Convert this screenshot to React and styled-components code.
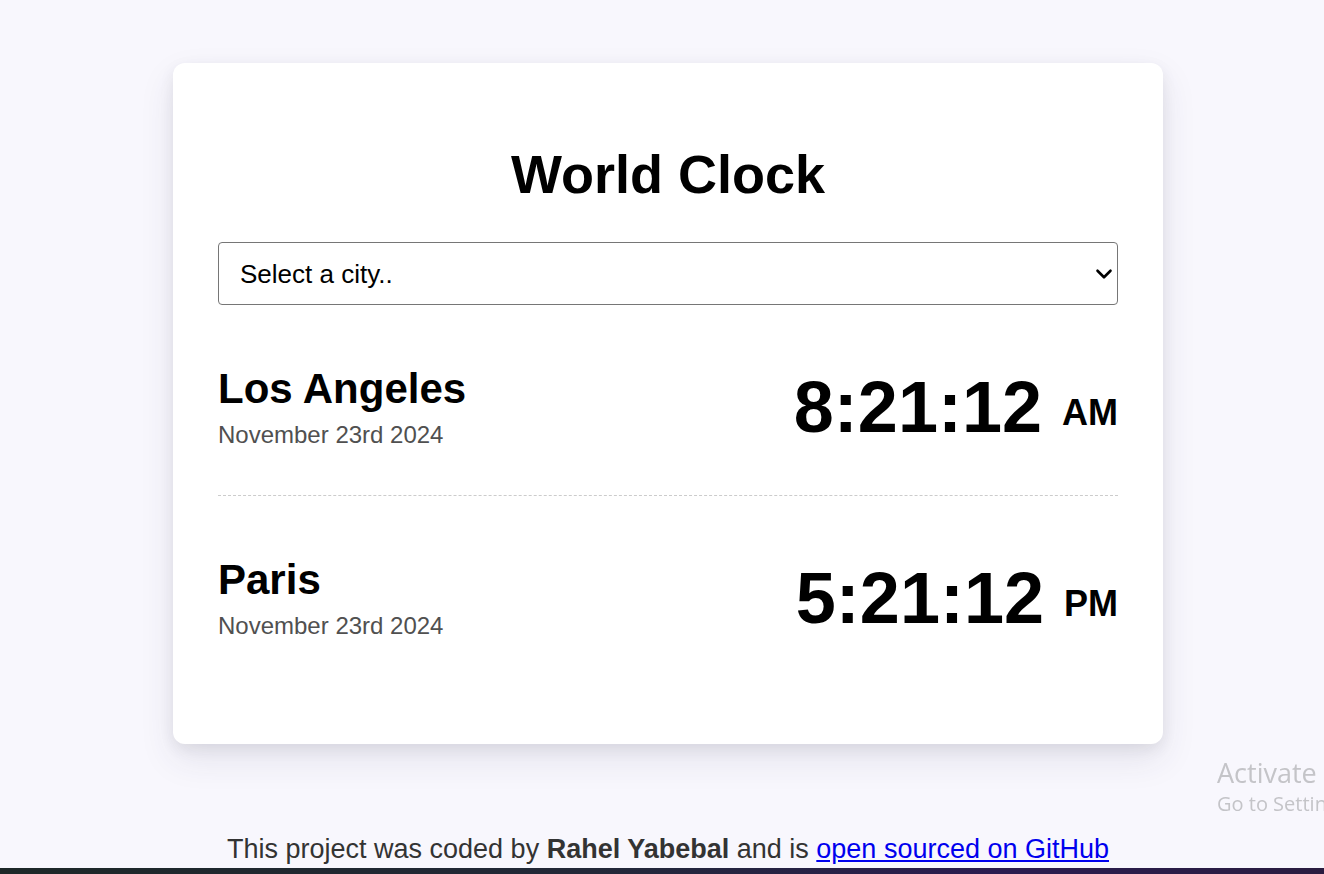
import React from "react";
import styled, { createGlobalStyle } from "styled-components";
import { ChevronDown } from "lucide-react";

const cities = [
  { name: "Los Angeles", date: "November 23rd 2024", time: "8:21:12", period: "AM" },
  { name: "Paris", date: "November 23rd 2024", time: "5:21:12", period: "PM" },
];

export default function App() {
  return (
    <>
      <GlobalStyle />
      <Page>
        <Card>
          <Title>World Clock</Title>
          <SelectWrap>
            <CitySelect defaultValue="">
              <option value="">Select a city..</option>
              <option value="local">My current location</option>
              <option value="America/Los_Angeles">Los Angeles</option>
              <option value="Europe/Paris">Paris</option>
              <option value="Asia/Tokyo">Tokyo</option>
            </CitySelect>
            <Arrow size={26} strokeWidth={2.4} />
          </SelectWrap>
          <CityList>
            {cities.map((city, i) => (
              <CityRow key={city.name} $last={i === cities.length - 1}>
                <div>
                  <CityName>{city.name}</CityName>
                  <CityDate>{city.date}</CityDate>
                </div>
                <CityTime>
                  {city.time} <Period>{city.period}</Period>
                </CityTime>
              </CityRow>
            ))}
          </CityList>
        </Card>
        <Footer>
          This project was coded by <strong>Rahel Yabebal</strong> and is{" "}
          <a href="#">open sourced on GitHub</a>
        </Footer>
      </Page>
      <Watermark>
        <WatermarkTitle>Activate Windows</WatermarkTitle>
        <WatermarkHint>Go to Settings to activate Windows.</WatermarkHint>
      </Watermark>
      <Taskbar />
    </>
  );
}

const GlobalStyle = createGlobalStyle`
  html, body {
    margin: 0;
    background: #f8f7fd;
    font-family: "Liberation Sans", Arial, sans-serif;
    overflow: hidden;
  }
`;

const Page = styled.div`
  padding: 63px 0 0 12px;
  display: flex;
  flex-direction: column;
  align-items: center;
`;

const Card = styled.div`
  width: 990px;
  box-sizing: border-box;
  padding: 45px 45px 45px;
  background: #fff;
  border-radius: 12px;
  box-shadow: 0 15px 35px rgba(50, 50, 93, 0.1), 0 5px 15px rgba(0, 0, 0, 0.07);
`;

const Title = styled.h1`
  margin: 37px 0 38px;
  text-align: center;
  font-size: 54px;
  line-height: 59px;
  font-weight: 700;
  color: #000;
`;

const SelectWrap = styled.div`
  position: relative;
`;

const CitySelect = styled.select`
  display: block;
  width: 100%;
  height: 63px;
  padding: 0 40px 0 21px;
  appearance: none;
  font-family: "Liberation Sans", Arial, sans-serif;
  font-size: 26px;
  color: #000;
  background: #fff;
  border: 1px solid #767676;
  border-radius: 4px;
`;

const Arrow = styled(ChevronDown)`
  position: absolute;
  right: 1px;
  top: 19px;
  color: #000;
  pointer-events: none;
`;

const CityList = styled.div``;

const CityRow = styled.div`
  display: flex;
  justify-content: space-between;
  align-items: center;
  padding: 60px 0 ${(p) => (p.$last ? "60px" : "47px")};
  border-bottom: ${(p) => (p.$last ? "none" : "1px dashed #cccccc")};
`;

const CityName = styled.h2`
  margin: 0;
  font-size: 42px;
  line-height: 47px;
  font-weight: 700;
  color: #000;
`;

const CityDate = styled.div`
  margin-top: 9px;
  font-size: 24px;
  line-height: 27px;
  color: #505050;
`;

const CityTime = styled.div`
  font-size: 72px;
  line-height: 72px;
  font-weight: 700;
  color: #000;
`;

const Period = styled.small`
  font-size: 36px;
  line-height: 1;
  vertical-align: middle;
`;

const Footer = styled.footer`
  margin-top: 90px;
  font-size: 27px;
  line-height: 31px;
  color: #333;
  text-align: center;

  strong {
    font-weight: 700;
  }

  a {
    color: #0000ee;
  }
`;

const Watermark = styled.div`
  position: fixed;
  left: 1217px;
  top: 756px;
  white-space: nowrap;
  font-family: "Open Sans", "Noto Sans", sans-serif;
  color: #c4c4c8;
`;

const WatermarkTitle = styled.div`
  font-size: 27px;
  line-height: 34px;
`;

const WatermarkHint = styled.div`
  font-size: 20px;
  line-height: 28px;
`;

const Taskbar = styled.div`
  position: fixed;
  left: 0;
  right: 0;
  bottom: 0;
  height: 6px;
  background: linear-gradient(90deg, #1d2828 0%, #222838 45%, #2a1c50 75%, #2a1c40 100%);
`;
